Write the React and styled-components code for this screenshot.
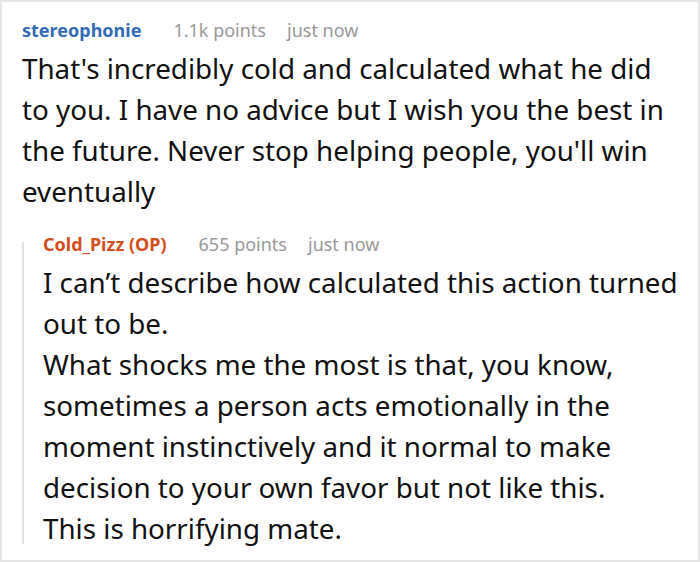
import React from 'react';
import styled, { createGlobalStyle } from 'styled-components';

const GlobalStyle = createGlobalStyle`
    html, body {
        margin: 0;
        padding: 0;
        background: #fff;
    }
`;

const Frame = styled.div`
    box-sizing: border-box;
    width: 700px;
    height: 562px;
    border: 2px solid #e6e6e6;
    background: #fff;
    font-family: "Noto Sans", "Open Sans", sans-serif;
    padding: 15px 14px 0 20px;
    overflow: hidden;
`;

const Comment = styled.div`
    display: flex;
    flex-direction: column;
`;

// thread line starts a little below the reply's header top
const Replies = styled.div`
    position: relative;
    margin-top: 19px;
    padding-left: 21px;

    &::before {
        content: '';
        position: absolute;
        left: 0;
        top: 11px;
        bottom: 5px;
        width: 2px;
        background: #e3e3e3;
    }
`;

const Meta = styled.div`
    display: flex;
    align-items: baseline;
    gap: 21px;
    font-size: 18px;
    line-height: 26px;
`;

const Author = styled.span`
    font-weight: 700;
    color: ${props => props.op ? '#d24e1c' : '#336bb5'};
    margin-right: 11px;
`;

const Muted = styled.span`
    color: #999;
`;

const Body = styled.p`
    margin: 5px 0 0;
    font-size: 27.75px;
    line-height: 41px;
    color: #111;
`;

const App = () => (
    <>
        <GlobalStyle />
        <Frame>
            <Comment>
                <Meta>
                    <Author>stereophonie</Author>
                    <Muted>1.1k points</Muted>
                    <Muted>just now</Muted>
                </Meta>
                <Body>
                    That's incredibly cold and calculated what he did to you. I have no advice but I wish you the best in the future. Never stop helping people, you'll win eventually
                </Body>
            </Comment>
            <Replies>
                <Comment>
                    <Meta>
                        <Author op>Cold_Pizz (OP)</Author>
                        <Muted>655 points</Muted>
                        <Muted>just now</Muted>
                    </Meta>
                    <Body>
                        I can’t describe how calculated this action turned out to be.
                        <br />
                        What shocks me the most is that, you know, sometimes a person acts emotionally in the moment instinctively and it normal to make decision to your own favor but not like this.
                        <br />
                        This is horrifying mate.
                    </Body>
                </Comment>
            </Replies>
        </Frame>
    </>
);

export default App;
